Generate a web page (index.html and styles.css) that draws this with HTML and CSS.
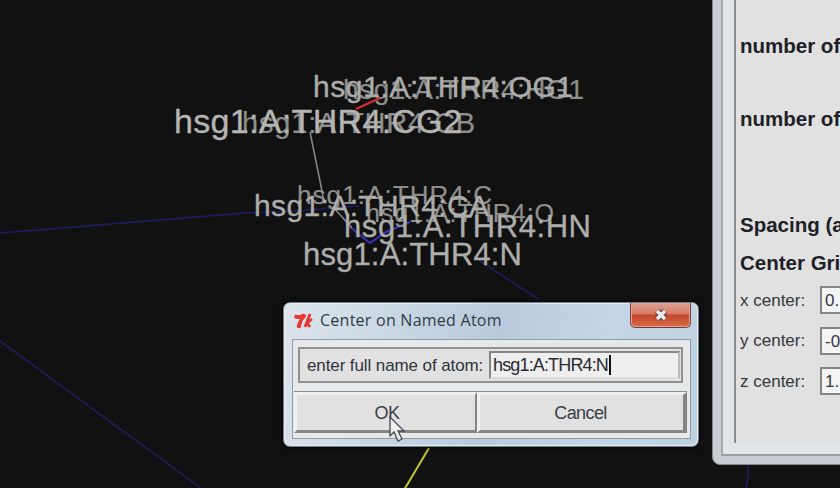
FILE: index.html
```html
<!DOCTYPE html>
<html lang="en">
<head>
<meta charset="utf-8">
<title>Center on Named Atom</title>
<link rel="stylesheet" href="styles.css">
</head>
<body>
<main class="desktop">
  <svg class="viewer" viewBox="0 0 840 488" width="840" height="488">
    <g class="bonds">
      <path class="blue" d="M0 233 L245 213 L300 211 L340 207 L359 206"/>
      <path class="blue" d="M0 341 L201 488 M474 257 L538 299"/>
      <path class="blue" d="M748 466 Q749 476 746 488"/>
      <path class="bright" d="M350 227 L370 243 L386 232 L410 222"/>
      <path class="grey" d="M310 132 L321 186 L324 202 M333 207 L352 228"/>
      <path class="yellow" d="M429 448 L404 490"/>
    </g>
    <g class="labels">
      <text class="far" x="343" y="99" textLength="241" font-size="28">hsg1:A:THR4:HG1</text>
      <text x="313" y="97" textLength="260" font-size="30">hsg1:A:THR4:OG1</text>
      <text class="far" x="242" y="133" textLength="233" font-size="29">hsg1:A:THR4:CB</text>
      <text class="near" x="174" y="133" textLength="288" font-size="34">hsg1:A:THR4:CG2</text>
      <text class="far" x="297" y="204" textLength="195" font-size="26">hsg1:A:THR4:C</text>
      <text class="far" x="366" y="222" textLength="188" font-size="25">hsg1:A:THR4:O</text>
      <text x="254" y="216" textLength="235" font-size="30">hsg1:A:THR4:CA</text>
      <text x="344" y="237" textLength="247" font-size="31">hsg1:A:THR4:HN</text>
      <text x="303" y="265" textLength="219" font-size="31">hsg1:A:THR4:N</text>
    </g>
    <path class="red" d="M356 109 L380 98"/>
  </svg>

  <section class="grid-window">
    <div class="grid-client">
      <div class="grid-panel">
        <h2 class="heading first">number of points</h2>
        <h2 class="heading second">number of points</h2>
        <h2 class="heading third">Spacing (angstrom)</h2>
        <h2 class="heading fourth">Center Grid Box</h2>
        <div class="coord"><span class="coord-label">x center:</span><span class="coord-value">0.</span></div>
        <div class="coord"><span class="coord-label">y center:</span><span class="coord-value">-0</span></div>
        <div class="coord"><span class="coord-label">z center:</span><span class="coord-value">1.</span></div>
      </div>
    </div>
  </section>

  <section class="dialog">
    <header class="titlebar">
      <svg class="tk" width="20" height="16" viewBox="0 0 20 16">
        <path d="M1 2 Q5 4 10 1 L12 3 Q7 7 6 15 L3 14 Q4 9 7 5 Q4 6 1 5Z"/>
        <path d="M16 1 L11 14 M18 6 L13 10 L16 14" class="tk-k"/>
      </svg>
      <h1 class="title">Center on Named Atom</h1>
      <div class="close">
        <svg width="18" height="14" viewBox="0 0 18 14"><path class="x-edge" d="M5 3 L13 11 M13 3 L5 11"/><path class="x-fill" d="M5 3 L13 11 M13 3 L5 11"/></svg>
      </div>
    </header>
    <div class="client">
      <div class="field">
        <label class="field-label">enter full name of atom:</label>
        <div class="entry"><span class="entry-text">hsg1:A:THR4:N</span><i class="caret"></i></div>
      </div>
      <div class="buttons">
        <div class="button ok"><span>OK</span></div>
        <div class="button cancel"><span>Cancel</span></div>
      </div>
    </div>
  </section>
  <svg class="pointer" width="20" height="28" viewBox="0 0 20 28"><path d="M1 1 V20 L5 16 L9 25 L13 23 L9 15 H15Z"/></svg>
</main>
</body>
</html>
```
FILE: styles.css
```css
* { box-sizing: border-box; }
body { margin: 0; font-family: "Liberation Sans", Arial, sans-serif; }
.desktop { position: relative; width: 840px; height: 488px; overflow: hidden; background: #111; }
.viewer { display: block; }
.bonds path { fill: none; stroke-width: 1.5; }
.bonds .blue { stroke: #1f1d62; }
.bonds .bright { stroke: #3834b4; stroke-width: 2; }
.bonds .grey { stroke: #898989; }
.bonds .yellow { stroke: #c3c32d; stroke-width: 2; }
.red { stroke: #d92b32; stroke-width: 2.2; }
.labels text { fill: #adadab; stroke: #adadab; stroke-width: .35; }
.labels .far { fill: #8e8e8c; stroke: #8e8e8c; stroke-width: .2; }
.labels .near { fill: #b5b5b3; stroke: #b5b5b3; }

.grid-window {
  position: absolute; left: 712px; top: -20px; width: 160px; height: 485px;
  padding: 0 0 8px 8px; border: 1px solid #85898c; border-radius: 0 0 0 8px;
  background: #c8ced3;
}
.grid-client { height: 100%; padding: 0 0 11px 11px; border-left: 2px solid #a2a9ad; border-bottom: 2px solid #999fa3; background: #e3e6e8; }
.grid-panel { height: 100%; padding: 20px 0 0 4px; border-left: 2px solid #8b8b8b; background: #e1e1e1; white-space: nowrap; }
.heading { margin: 0; font-size: 20.5px; line-height: 24px; color: #1d2025; font-weight: bold; }
.first { padding-top: 33px; }
.second { padding-top: 49px; }
.third { padding-top: 82px; }
.fourth { padding-top: 14px; margin-bottom: 11px; }
.coord { display: flex; align-items: center; height: 28px; margin-bottom: 12.5px; color: #34373d; }
.coord-label { flex: none; width: 80px; padding-top: 1px; font-size: 17px; }
.coord-value { flex: none; width: 70px; height: 28px; padding-left: 3px; border: 2px solid #858585; background: #f4f4f4; font-size: 17px; line-height: 25px; }

.dialog {
  position: absolute; left: 283px; top: 302px; width: 416px; height: 145px;
  padding: 0 7px 8px 8px; border: 1px solid #74818b; border-radius: 7px;
  background: linear-gradient(100deg, #dce4eb 0%, #cad8e4 25%, #b9cadd 50%, #c4d6e5 75%, #bdd1df 100%);
  box-shadow: inset 0 0 1px 1px #e5edf2, 0 0 5px #000;
}
.titlebar { display: flex; align-items: flex-start; height: 36px; }
.tk { margin: 10px 6px 0 2px; }
.tk path { fill: #e7362f; stroke: #e7362f; stroke-width: 1; }
.tk .tk-k { fill: none; stroke-width: 2.8; }
.title { flex: 1; margin: 6px 0 0; font: 400 16px/23px "Open Sans", "Noto Sans", sans-serif; letter-spacing: .25px; color: #303b46; white-space: nowrap; }
.close {
  display: flex; align-items: center; justify-content: center; width: 61px; height: 25px;
  border: 1px solid #743e3b; border-top: 0; border-radius: 0 0 5px 5px;
  background: linear-gradient(#dca092 0, #d67b69 45%, #c44428 50%, #d66c4b 100%);
  box-shadow: inset 0 0 0 1px #e5a191;
}
.close path { fill: none; }
.x-edge { stroke: #674c4c; stroke-width: 6; }
.x-fill { stroke: #f3eeee; stroke-width: 3.3; }
.client { height: 100px; padding: 7px 5px 2px 1px; border: 1px solid #8d9da9; background: #e7e8e9; }
.field { display: flex; align-items: center; height: 36px; margin-left: 4px; margin-right: 2px; padding: 0 1px 0 7px; border: 2px solid #929292; background: #e1e1e1; }
.field-label { flex: none; width: 182px; padding-top: 2px; font-size: 17px; letter-spacing: -.1px; color: #30343c; white-space: nowrap; }
.entry { display: flex; flex: 1; align-items: center; height: 28px; padding-left: 2px; border: 2px solid #858585; border-bottom-color: #ddd; border-right-color: #bbb; background: #eee; }
.entry-text { padding-top: 1px; font-size: 18px; letter-spacing: -.85px; color: #292c31; }
.caret { width: 2px; height: 20px; margin-left: 1px; background: #111; }
.buttons { display: flex; height: 43px; margin-top: 8px; margin-right: -2px; border-top: 1px solid #8e8e8e; }
.button { display: flex; align-items: center; justify-content: center; height: 41px; padding-top: 2px; border-style: solid; border-width: 3px; border-color: #f0f0f0 #858585 #858585 #f0f0f0; background: #e1e1e1; font-size: 18px; letter-spacing: -.6px; color: #3b3e47; }
.ok { width: 183px; padding-left: 2px; border-right-width: 2px; }
.cancel { flex: 1; padding-right: 2px; border-right-width: 4px; }
.pointer { position: absolute; left: 389px; top: 416px; }
.pointer path { fill: #ededed; stroke: #424853; stroke-width: 1.3; }
```
